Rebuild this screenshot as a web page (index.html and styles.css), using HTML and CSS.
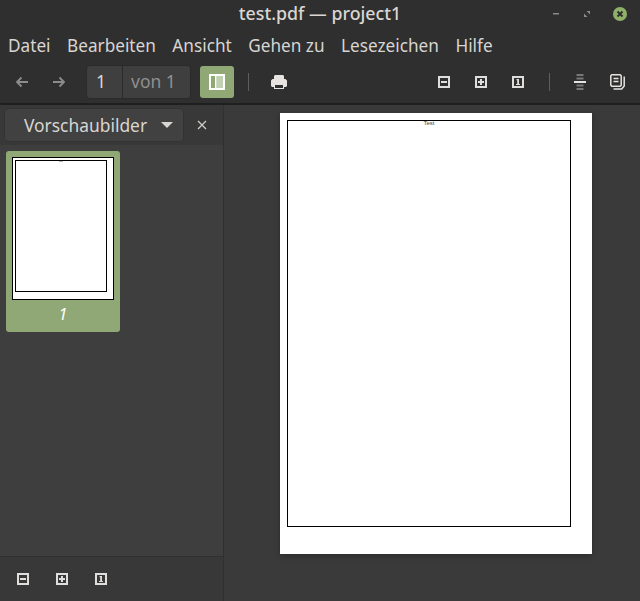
FILE: index.html
```
<!DOCTYPE html>
<html lang="de">
<head>
<meta charset="utf-8">
<title>test.pdf — project1</title>
<link rel="stylesheet" href="styles.css">
</head>
<body>
<svg class="defs" width="0" height="0">
  <symbol id="zoom-out" viewBox="0 0 12 12"><path fill="currentColor" fill-rule="evenodd" d="M0 0h12v12H0zM2 2v8h8V2zM3 5h6v2H3z"/></symbol>
  <symbol id="zoom-in" viewBox="0 0 12 12"><path fill="currentColor" fill-rule="evenodd" d="M0 0h12v12H0zM2 2v8h8V2zM5 3h2v2h2v2H7v2H5V7H3V5h2z"/></symbol>
  <symbol id="zoom-one" viewBox="0 0 12 12"><path fill="currentColor" fill-rule="evenodd" d="M0 0h12v12H0zM2 2v8h8V2zM4.500 3H7v5h1v1H4V8h1.200V4.300H4.500z"/></symbol>
</svg>
<div class="window">
  <header class="titlebar">
    <h1 class="title">test.pdf — project1</h1>
    <div class="wm">
      <svg class="wm-min" width="10" height="10" viewBox="0 0 10 10"><rect x="2" y="4" width="6" height="1.500" fill="#8a8a8a"/></svg>
      <svg class="wm-max" width="10" height="10" viewBox="0 0 10 10"><path d="M4.500 2H8v3.500zM2 4.500L5.500 8H2z" fill="#8a8a8a"/></svg>
      <svg class="wm-close" width="16" height="16" viewBox="0 0 16 16"><circle cx="8" cy="8" r="7" fill="#8fb069"/><path d="M5.500 5.500l5 5M10.500 5.500l-5 5" stroke="#2b2b2b" stroke-width="1.800"/></svg>
    </div>
  </header>
  <nav class="menubar">
    <span>Datei</span><span>Bearbeiten</span><span>Ansicht</span><span>Gehen zu</span><span>Lesezeichen</span><span>Hilfe</span>
  </nav>
  <div class="toolbar">
    <svg class="nav-icon" width="16" height="16" viewBox="0 0 16 16"><path d="M14 8H3M7.500 3.500L3 8l4.500 4.500" fill="none" stroke="#8c8c8c" stroke-width="1.800"/></svg>
    <svg class="nav-icon nav-next" width="16" height="16" viewBox="0 0 16 16"><path d="M2 8h11M8.500 3.500L13 8l-4.500 4.500" fill="none" stroke="#8c8c8c" stroke-width="1.800"/></svg>
    <div class="pager"><span class="pager-num">1</span><span class="pager-of">von 1</span></div>
    <button class="side-toggle"><svg width="16" height="16" viewBox="0 0 16 16"><path fill="#fff" fill-rule="evenodd" d="M0 0h16v16H0zM2 2v12h4V2zM7.500 2v12H14V2z"/><rect x="7.500" y="2" width="6.500" height="12" fill="#fff" opacity=".45"/></svg></button>
    <i class="sep sep-a"></i>
    <svg class="print" width="16" height="16" viewBox="0 0 16 16"><path fill="#e6e3e1" fill-rule="evenodd" d="M4 1h8l1 1v3h1.500L16 6.500V12l-1 1h-2v2H3v-2H1l-1-1V6.500L1.500 5H3V2zM4 11v3h8v-3z"/></svg>
    <div class="spacer"></div>
    <svg class="tool"><use href="#zoom-out"/></svg>
    <svg class="tool"><use href="#zoom-in"/></svg>
    <svg class="tool"><use href="#zoom-one"/></svg>
    <i class="sep sep-b"></i>
    <svg class="dual" width="12" height="16" viewBox="0 0 12 16"><path fill="#777" d="M2.500 0h7v2h-7zM2.500 3.500h7v2h-7zM2.500 10.500h7v2h-7zM2.500 14h7v2h-7z"/><rect y="7" width="12" height="2" fill="#e6e3e1"/></svg>
    <svg class="cont" width="16" height="16" viewBox="0 0 16 16"><path fill="none" stroke="#e6e3e1" stroke-width="1.500" d="M1.800.800h8.400l1 1v9.400l-1 1H1.800l-1-1V1.800zM3.500 4.500h5M3.500 7.500h5"/><path fill="none" stroke="#e6e3e1" stroke-width="1.500" d="M14.200 2.500v9.500l-2.500 3H3.500"/></svg>
  </div>
  <div class="content">
    <aside class="sidebar">
      <div class="side-head">
        <div class="combo">
          <span>Vorschaubilder</span>
          <svg width="12" height="6" viewBox="0 0 12 6"><path d="M0 0h12L6 6z" fill="#d8d5d2"/></svg>
        </div>
        <svg class="side-close" width="10" height="10" viewBox="0 0 10 10"><path d="M1 1l8 8M9 1L1 9" stroke="#cfcdca" stroke-width="1.300"/></svg>
      </div>
      <div class="side-list">
        <div class="thumb">
          <div class="thumb-page"><div class="thumb-inner"><i class="thumb-dash"></i></div></div>
          <em class="thumb-label">1</em>
        </div>
      </div>
      <div class="side-foot">
        <svg class="tool"><use href="#zoom-out"/></svg>
        <svg class="tool"><use href="#zoom-in"/></svg>
        <svg class="tool"><use href="#zoom-one"/></svg>
      </div>
    </aside>
    <main class="viewer">
      <div class="page"><div class="page-frame"><span class="page-text">Test</span></div></div>
    </main>
  </div>
</div>
</body>
</html>
```
FILE: styles.css
```
html, body { margin: 0; padding: 0; }
body { background: #3a3a3a; font-family: "Noto Sans", "Open Sans", sans-serif; color: #d8d5d2; }
.defs { display: block; height: 0; }
.window { width: 640px; height: 601px; display: flex; flex-direction: column; overflow: hidden; background: #2f2f2f; }
.titlebar { position: relative; height: 30px; box-sizing: border-box; padding-bottom: 3px; flex: none; display: flex; align-items: center; justify-content: center; background: #2f2f2f; }
.title { margin: 0; font-size: 17.800px; font-weight: 500; color: #d9d6d3; line-height: 27px; }
.wm { position: absolute; right: 12px; top: 6px; display: flex; align-items: center; }
.wm-min { margin-right: 21px; }
.wm-max { margin-right: 20px; }
.menubar { height: 30px; flex: none; display: flex; align-items: center; gap: 16.500px; padding-left: 8px; font-size: 17.200px; color: #d8d5d2; }
.toolbar { height: 45px; flex: none; display: flex; align-items: center; padding: 0 0 0 14px; box-sizing: border-box; border-bottom: 2px solid #1f1f1f; }
.nav-next { margin-left: 21px; }
.pager { margin-left: 19px; height: 34px; width: 105px; display: flex; box-sizing: border-box; background: #3f3f3f; border: 1px solid #2a2a2a; border-radius: 4px; font-size: 17.500px; line-height: 31px; }
.pager-num { width: 36px; padding-left: 9px; box-sizing: border-box; border-right: 1px solid #2a2a2a; color: #d8d5d2; }
.pager-of { padding-left: 8px; color: #8f8f8f; }
.side-toggle { margin-left: 9px; width: 34px; height: 32px; padding: 0; border: 0; border-radius: 3px; background: #8fa876; display: flex; align-items: center; justify-content: center; }
.sep { display: block; width: 1px; height: 18px; background: #5e5e5e; }
.sep-a { margin-left: 14px; }
.print { margin-left: 22px; }
.spacer { flex: 1; }
.tool { display: block; width: 12px; height: 12px; color: #e0dedc; }
.toolbar .tool { margin-right: 25px; }
.dual { margin-left: 24px; }
.cont { margin-left: 24px; margin-right: 14px; }
.content { flex: 1; display: flex; min-height: 0; }
.sidebar { width: 223px; flex: none; display: flex; flex-direction: column; border-right: 1px solid #303030; background: #3e3e3e; }
.side-head { height: 40px; flex: none; display: flex; align-items: center; padding-left: 4px; background: #383838; }
.combo { width: 180px; height: 34px; box-sizing: border-box; display: flex; align-items: center; justify-content: space-between; padding: 0 10px 0 19px; background: #414141; border: 1px solid #333; border-radius: 4px; font-size: 17.400px; color: #d8d5d2; }
.side-close { margin-left: 13px; }
.side-list { flex: 1; padding: 6px; }
.thumb { width: 114px; height: 181px; box-sizing: border-box; padding-top: 6px; border-radius: 3px; background: #8fa876; display: flex; flex-direction: column; align-items: center; }
.thumb-page { width: 102px; height: 143px; box-sizing: border-box; padding: 2px; background: #fff; border: 1px solid #000; }
.thumb-inner { width: 92px; height: 132px; box-sizing: border-box; border: 1px solid #000; display: flex; justify-content: center; }
.thumb-dash { display: block; width: 4px; height: 1px; background: #bbb; }
.thumb-label { margin-top: 2px; font-size: 16px; line-height: 24px; color: #fff; }
.side-foot { height: 44px; flex: none; display: flex; align-items: center; gap: 27px; padding-left: 17px; background: #383838; border-top: 1px solid #303030; }
.viewer { flex: 1; display: flex; justify-content: center; padding: 8px 0 0 8px; background: #3a3a3a; }
.page { width: 312px; height: 441px; box-sizing: border-box; padding: 7px 21px 27px 7px; background: #fff; box-shadow: 0 2px 6px rgba(0,0,0,.25); }
.page-frame { height: 100%; box-sizing: border-box; border: 1px solid #000; display: flex; justify-content: center; align-items: flex-start; }
.page-text { font-family: "Liberation Sans", sans-serif; font-size: 6px; line-height: 5px; color: #444; }
```
